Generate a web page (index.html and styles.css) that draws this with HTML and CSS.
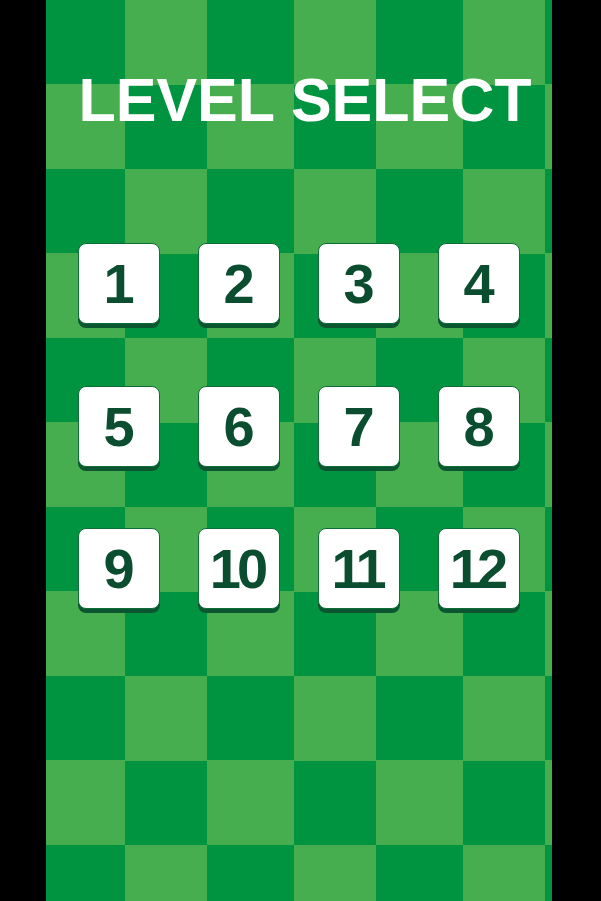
FILE: index.html
```html
<!DOCTYPE html>
<html lang="en">
<head>
  <meta charset="UTF-8">
  <meta name="viewport" content="width=device-width, initial-scale=1.0">
  <title>Level Select</title>
  <link rel="stylesheet" href="styles.css">
</head>
<body>
  <div class="game">
    <h1>LEVEL SELECT</h1>

    <div class="levels">
      <button class="level">1</button>
      <button class="level">2</button>
      <button class="level">3</button>
      <button class="level">4</button>
      <button class="level">5</button>
      <button class="level">6</button>
      <button class="level">7</button>
      <button class="level">8</button>
      <button class="level">9</button>
      <button class="level">10</button>
      <button class="level">11</button>
      <button class="level">12</button>
    </div>
  </div>
</body>
</html>
```

FILE: styles.css
```css
body {
  margin: 0;
  background: #000;
  font-family: "Liberation Sans", Arial, sans-serif;
}
.game {
  width: 506px;
  height: 901px;
  margin-left: 46px;
  overflow: hidden;
  /* checkerboard: 82px + 87px columns, 84.5px rows */
  background: conic-gradient(at 82px 84.5px, #009441 25%, #47ae4f 0 50%, #009441 0 75%, #47ae4f 0);
  background-size: 169px 169px;
  background-position: 79px 0;
}
h1 {
  margin: 0;
  padding: 70px 0 0 12px;
  font-size: 61px;
  line-height: 60px;
  font-weight: bold;
  color: #fff;
  text-align: center;
}
.levels {
  display: grid;
  grid-template-columns: repeat(4, 82px);
  column-gap: 38px;
  row-gap: 61.5px;
  justify-content: center;
  margin-top: 113px;
}
.level {
  height: 81px;
  padding: 0 4px 0 0;
  background: #fff;
  border: 1px solid #0c6e36;
  border-radius: 8px;
  box-shadow: 0 4px 0 #0b5530;
  font-family: "Liberation Sans", Arial, sans-serif;
  font-size: 56px;
  font-weight: bold;
  line-height: 79px;
  letter-spacing: -4px;
  color: #0b4d2f;
  cursor: pointer;
}
```
